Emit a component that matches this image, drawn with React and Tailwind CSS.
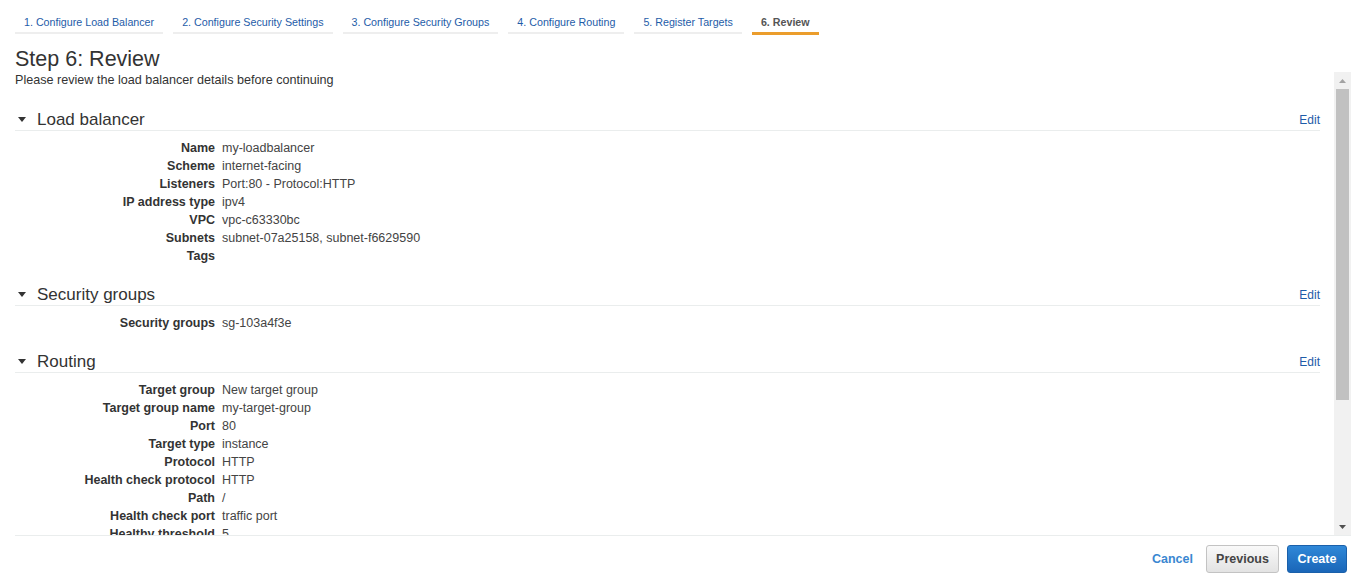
import React from "react";

const tabs = [
  "1. Configure Load Balancer",
  "2. Configure Security Settings",
  "3. Configure Security Groups",
  "4. Configure Routing",
  "5. Register Targets",
  "6. Review",
];

const sections = [
  {
    title: "Load balancer",
    rows: [
      ["Name", "my-loadbalancer"],
      ["Scheme", "internet-facing"],
      ["Listeners", "Port:80 - Protocol:HTTP"],
      ["IP address type", "ipv4"],
      ["VPC", "vpc-c63330bc"],
      ["Subnets", "subnet-07a25158, subnet-f6629590"],
      ["Tags", ""],
    ],
  },
  {
    title: "Security groups",
    rows: [["Security groups", "sg-103a4f3e"]],
  },
  {
    title: "Routing",
    rows: [
      ["Target group", "New target group"],
      ["Target group name", "my-target-group"],
      ["Port", "80"],
      ["Target type", "instance"],
      ["Protocol", "HTTP"],
      ["Health check protocol", "HTTP"],
      ["Path", "/"],
      ["Health check port", "traffic port"],
      ["Healthy threshold", "5"],
      ["Unhealthy threshold", "2"],
      ["Timeout", "5"],
      ["Interval", "30"],
      ["Success codes", "200"],
    ],
  },
];

function Caret() {
  return (
    <svg width="8" height="5" viewBox="0 0 8 5" className="ml-[3px] mr-[11px]">
      <polygon points="0,0 8,0 4,5" fill="#333" />
    </svg>
  );
}

function Section({ title, rows }) {
  return (
    <div className="mb-[19px]">
      <div className="flex items-center h-[22px] border-b border-[#eaeded]">
        <Caret />
        <span className="text-[17px] leading-[21px] text-[#333]">{title}</span>
        <a className="ml-auto text-[12px] text-[#1e5ca8] cursor-pointer">Edit</a>
      </div>
      <div className="pt-[8px] grid grid-cols-[200px_1fr] gap-x-[7px] text-[12.5px] leading-[18px]">
        {rows.map(([label, value]) => (
          <React.Fragment key={label}>
            <div className="text-right font-bold text-[#333]">{label}</div>
            <div className="text-[#444] min-h-[18px]">{value}</div>
          </React.Fragment>
        ))}
      </div>
    </div>
  );
}

function Scrollbar() {
  return (
    <div className="w-[17px] h-full bg-[#f1f1f1] flex flex-col items-center">
      <div className="h-[17px] flex items-center justify-center">
        <svg width="7" height="4" viewBox="0 0 7 4">
          <polygon points="0,4 7,4 3.5,0" fill="#a3a3a3" />
        </svg>
      </div>
      <div className="w-[13px] h-[311px] bg-[#c1c1c1]" />
      <div className="flex-1" />
      <div className="h-[17px] flex items-center justify-center">
        <svg width="7" height="4" viewBox="0 0 7 4">
          <polygon points="0,0 7,0 3.5,4" fill="#505050" />
        </svg>
      </div>
    </div>
  );
}

export default function App() {
  return (
    <div
      className="w-[1360px] h-[581px] bg-white pl-[15px] pr-[9px] overflow-hidden flex flex-col"
      style={{ fontFamily: '"Liberation Sans", Arial, sans-serif' }}
    >
      <div className="flex items-start gap-[10px] mt-[12px] h-[23px]">
        {tabs.map((t, i) => {
          const active = i === tabs.length - 1;
          return (
            <div
              key={t}
              className={
                active
                  ? "h-[23px] px-[9px] border-b-[3px] border-[#eb9d2c] text-[10.7px] leading-[20px] font-bold text-[#555]"
                  : "h-[22px] px-[9px] border-b-2 border-[#eeeeee] text-[10.7px] leading-[20px] text-[#1e5ca8]"
              }
            >
              {t}
            </div>
          );
        })}
      </div>

      <div className="mt-[12px] h-[25px] text-[21.5px] leading-[25px] text-[#333]">Step 6: Review</div>

      <div className="flex h-[463px]">
        <div className="flex-1 pr-[14px] overflow-hidden">
          <div className="h-[16px] text-[12.6px] leading-[16px] text-[#333]">
            Please review the load balancer details before continuing
          </div>
          <div className="mt-[21px]">
            {sections.map((s) => (
              <Section key={s.title} title={s.title} rows={s.rows} />
            ))}
          </div>
        </div>
        <Scrollbar />
      </div>

      <div className="border-t border-[#eaeded] flex justify-end items-center pt-[9px] pr-[4px]">
        <a className="text-[12.5px] font-bold text-[#3a87d1] mr-[13px] cursor-pointer">Cancel</a>
        <button className="w-[73px] h-[28px] rounded-[3px] border border-[#c3c3c3] bg-linear-to-b from-[#f9f9f9] to-[#e3e3e3] text-[12.5px] font-bold text-[#444] mr-[8px]">
          Previous
        </button>
        <button className="w-[60px] h-[28px] rounded-[3px] border border-[#1a60aa] bg-linear-to-b from-[#2f88d8] to-[#1a66b8] text-[12.5px] font-bold text-white">
          Create
        </button>
      </div>
    </div>
  );
}
